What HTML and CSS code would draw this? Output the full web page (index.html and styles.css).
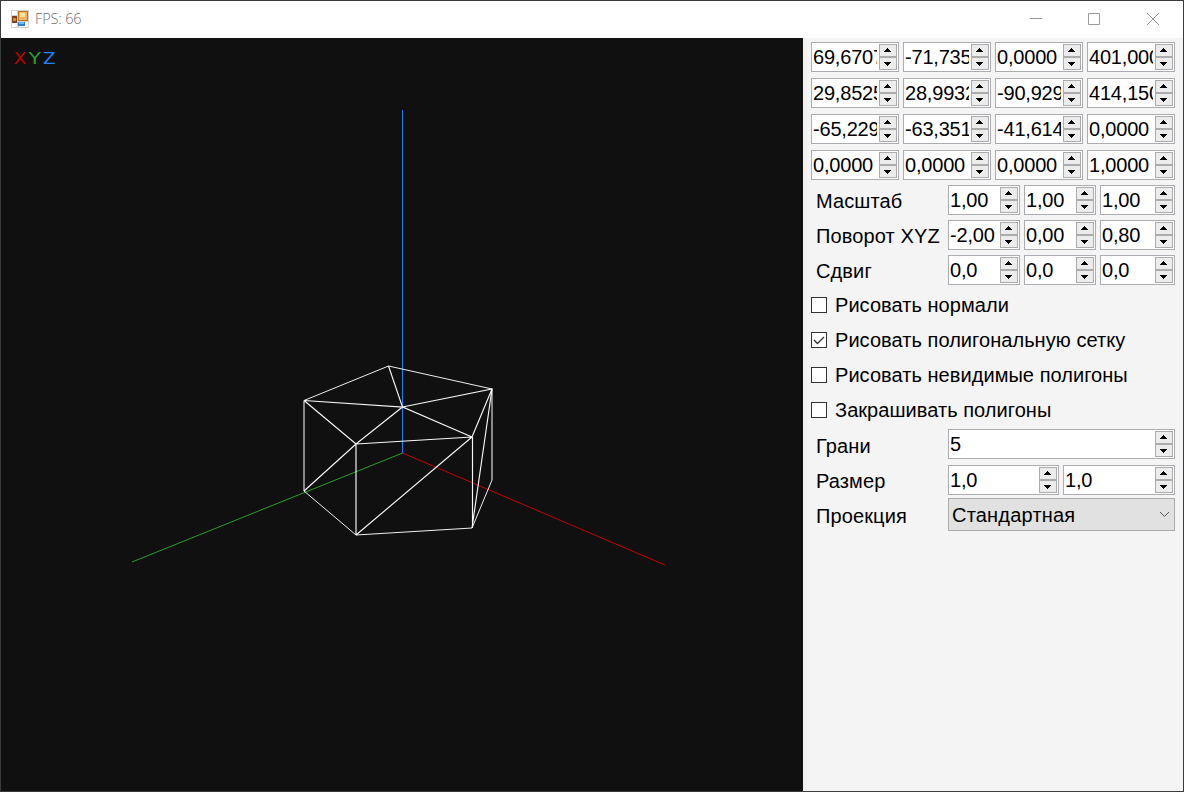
FILE: index.html
```html
<!DOCTYPE html>
<html lang="ru">
<head>
<meta charset="utf-8">
<title>FPS: 66</title>
<link rel="stylesheet" href="styles.css">
</head>
<body>
<div class="window">
  <header class="titlebar">
    <svg class="app-icon" width="18" height="18" viewBox="0 0 18 18">
      <rect width="18" height="18" fill="#d2d2d2"/>
      <path d="M1 1h5v4H1zM1 13h5v4H1zM8 12h9v5H8z" fill="#fff"/>
      <rect x="1" y="6" width="5" height="7" fill="#85431b"/><rect x="2" y="8" width="3" height="3" fill="#c98b50"/>
      <rect x="7.5" y="1.500" width="9" height="9" fill="#f5b65c" stroke="#bd7425"/><rect x="9" y="3" width="5" height="4" fill="#ffdf9c"/>
      <rect x="7" y="12" width="7" height="4" fill="#2e7fd3"/><rect x="8" y="12" width="5" height="2" fill="#70bdf5"/>
    </svg>
    <span class="title">FPS: 66</span>
    <svg class="controls" width="130" height="14" viewBox="0 0 130 14">
      <path d="M0 6.500h12M58.500 1.500h11v11h-11zM117 1l12 12M129 1l-12 12" fill="none" stroke="#999"/>
    </svg>
  </header>
  <main class="content">
    <section class="viewport">
      <svg width="802" height="753" viewBox="1 38 802 753">
        <g class="axis-names"><text x="13.500" y="64" fill="#b80000" textLength="13" lengthAdjust="spacingAndGlyphs">X</text><text x="28.500" y="64" fill="#2a9c2a" textLength="12.500" lengthAdjust="spacingAndGlyphs">Y</text><text x="43" y="64" fill="#1e82f0" textLength="12.500" lengthAdjust="spacingAndGlyphs">Z</text></g>
        <g fill="none">
          <path d="M402.500 453L665 565" stroke="#c80000"/>
          <path d="M402.500 453L132 562" stroke="#2aa02a"/>
          <path d="M402.500 110V453" stroke="#1e82f0"/>
          <path d="M304 400.500V491M492 389V480" stroke="#fff"/>
          <path d="M304 400.500L388.500 366L492 389M304 491L356 535L472 528L492 480" stroke="#efefef"/>
          <path d="M304 400.500L402.500 407L388.500 366M402.500 407L492 389L472 437L402.500 407L356 444L304 400.500M356 444L472 437M356 444L304 491M356 535L472 437M472 528L492 389M356 444V535M472.500 437V528" stroke="#f8f8f8" stroke-width="1.150"/>
        </g>
      </svg>
    </section>
    <aside class="panel">
      <div class="matrix">
        <div class="spin"><span>69,6707</span><i></i></div><div class="spin"><span>-71,7356</span><i></i></div><div class="spin"><span>0,0000</span><i></i></div><div class="spin"><span>401,0000</span><i></i></div>
        <div class="spin"><span>29,8525</span><i></i></div><div class="spin"><span>28,9932</span><i></i></div><div class="spin"><span>-90,9297</span><i></i></div><div class="spin"><span>414,1500</span><i></i></div>
        <div class="spin"><span>-65,2290</span><i></i></div><div class="spin"><span>-63,3510</span><i></i></div><div class="spin"><span>-41,6147</span><i></i></div><div class="spin"><span>0,0000</span><i></i></div>
        <div class="spin"><span>0,0000</span><i></i></div><div class="spin"><span>0,0000</span><i></i></div><div class="spin"><span>0,0000</span><i></i></div><div class="spin"><span>1,0000</span><i></i></div>
      </div>
      <div class="transform">
        <label>Масштаб</label><div class="spin"><span>1,00</span><i></i></div><div class="spin"><span>1,00</span><i></i></div><div class="spin"><span>1,00</span><i></i></div>
        <label>Поворот XYZ</label><div class="spin"><span>-2,00</span><i></i></div><div class="spin"><span>0,00</span><i></i></div><div class="spin"><span>0,80</span><i></i></div>
        <label>Сдвиг</label><div class="spin"><span>0,0</span><i></i></div><div class="spin"><span>0,0</span><i></i></div><div class="spin"><span>0,0</span><i></i></div>
      </div>
      <div class="options">
        <div class="check"><b></b><span>Рисовать нормали</span></div>
        <div class="check"><b><svg width="14" height="14" viewBox="0 0 14 14"><path d="M2 7l3.500 3.500L12 4" fill="none" stroke="#333" stroke-width="1.300"/></svg></b><span>Рисовать полигональную сетку</span></div>
        <div class="check"><b></b><span>Рисовать невидимые полигоны</span></div>
        <div class="check"><b></b><span>Закрашивать полигоны</span></div>
      </div>
      <div class="shape">
        <div class="row edges"><label>Грани</label><div class="spin"><span>5</span><i></i></div></div>
        <div class="row size"><label>Размер</label><div class="spin"><span>1,0</span><i></i></div><div class="spin"><span>1,0</span><i></i></div></div>
        <div class="row projection"><label>Проекция</label><div class="combo"><span>Стандартная</span><svg width="11" height="7" viewBox="0 0 11 7"><path d="M1 1l4.500 4.500L10 1" fill="none" stroke="#555"/></svg></div></div>
      </div>
    </aside>
  </main>
</div>
</body>
</html>
```
FILE: styles.css
```css
* { box-sizing: border-box; }
body { margin: 0; font: 20px/24px "Liberation Sans", Arial, sans-serif; color: #000; }
.window { width: 1184px; height: 792px; border: 1px solid #3b3b3b; display: flex; flex-direction: column; overflow: hidden; }
.titlebar { height: 37px; flex: none; background: #fff; display: flex; align-items: center; padding: 0 23px 1px 10px; }
.title { font: 300 14.500px/20px "Open Sans", sans-serif; color: #707070; margin-left: 6px; letter-spacing: -.15px; }
.controls { margin-left: auto; }
.content { display: flex; flex: 1; }
.viewport { width: 802px; background: #101010; }
.viewport svg { display: block; }
.axis-names { font: 16px "DejaVu Sans", sans-serif; }
.panel { flex: 1; background: #f4f4f4; border-left: 4px solid #f0f0f0; padding: 4px 8px 0 4px; }
.matrix { display: grid; grid-template-columns: repeat(4, 88px); gap: 6px 4px; }
.spin { height: 30px; background: #fff; border: 1px solid #abadb3; display: flex; padding: 1px; overflow: hidden; min-width: 0; }
.spin span { flex: 1; min-width: 0; overflow: hidden; white-space: nowrap; line-height: 26px; margin-right: 2px; letter-spacing: -.2px; }
.spin i { width: 18px; height: 26px; flex: none; display: flex; flex-direction: column; }
.spin i::before, .spin i::after { content: ""; height: 13px; border: 1px solid #acacac; background: linear-gradient(#000, #000) 4px 6px / 7px 1px no-repeat, linear-gradient(#000, #000) 5px 5px / 5px 1px no-repeat, linear-gradient(#000, #000) 6px 4px / 3px 1px no-repeat, linear-gradient(#000, #000) 7px 3px / 1px 1px no-repeat, #ececec; }
.spin i::after { transform: scaleY(-1); }
.transform { display: grid; grid-template-columns: 133px 72px 72px 75px; gap: 5px 4px; margin-top: 5px; }
label { padding-left: 5px; line-height: 32px; height: 30px; white-space: nowrap; letter-spacing: .12px; }
.options { margin-top: 2px; padding-top: 6px; }
.check { display: flex; height: 35px; padding-bottom: 11px; align-items: center; gap: 8px; white-space: nowrap; letter-spacing: .05px; }
.check b { width: 16px; height: 16px; background: #fff; border: 1px solid #333; }
.check svg { display: block; }
.shape { margin-top: -4px; }
.row { display: grid; column-gap: 4px; }
.edges { grid-template-columns: 133px 227px; height: 36px; }
.edges label { line-height: 34px; }
.size { grid-template-columns: 133px 111px 112px; height: 33px; }
.projection { grid-template-columns: 133px 227px; }
.projection label { line-height: 36px; }
.combo { height: 33px; background: #e1e1e1; border: 1px solid #acacac; display: flex; align-items: center; justify-content: space-between; padding: 0 4px 0 3px; letter-spacing: .2px; }
```
